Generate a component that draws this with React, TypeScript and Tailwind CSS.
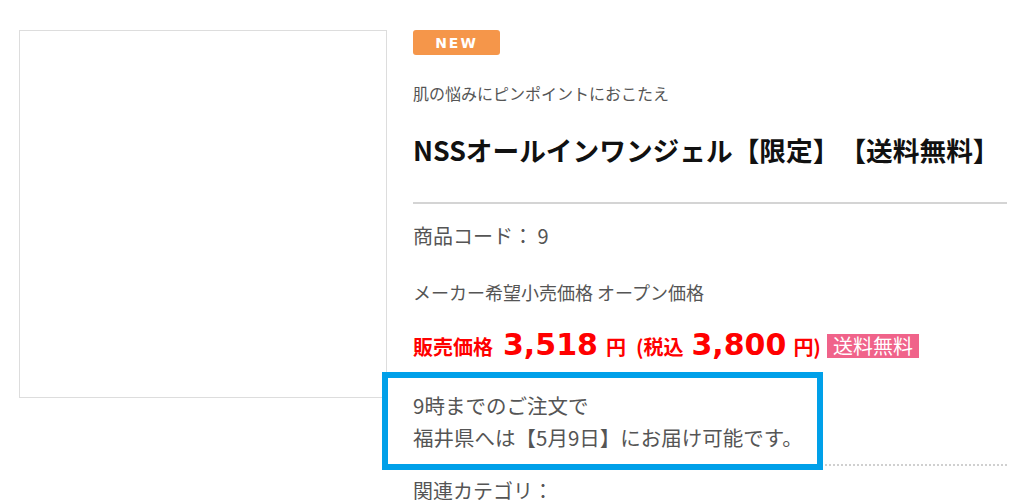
const jp = { fontFamily: '"Noto Sans CJK JP", sans-serif' };
const num = { fontFamily: '"DejaVu Sans", "Noto Sans CJK JP", sans-serif' };

const App = () => {
  return (
    <div className="relative w-[1024px] h-[500px] overflow-hidden bg-white [text-spacing-trim:space-all]" style={jp}>
      <div className="flex gap-[26px] pl-[19px] pt-[30px]">
        {/* Product image placeholder */}
        <div className="w-[368px] h-[368px] shrink-0 border border-[#dddddd] bg-white" />

        {/* Product info */}
        <div className="flex flex-col w-[594px]">
          <div
            className="w-[87px] h-[25px] rounded-[3px] bg-[#f5964a] text-white text-[14px] font-bold tracking-[2px] flex items-center justify-center leading-none"
            style={num}
          >
            NEW
          </div>

          <p className="mt-[28px] text-[16px] leading-[20px] text-[#555555]">
            肌の悩みにピンポイントにおこたえ
          </p>

          <h1 className="mt-[31px] text-[26.7px] leading-[32px] font-bold text-[#111111] whitespace-nowrap">
            NSSオールインワンジェル【限定】【送料無料】
          </h1>

          <div className="mt-[36px] h-[2px] bg-[#d4d4d4]" />

          <p className="mt-[20px] text-[20px] leading-[24px] text-[#555555]">商品コード： 9</p>

          <p className="mt-[32px] text-[18px] leading-[24px] text-[#555555]">
            メーカー希望小売価格 オープン価格
          </p>

          {/* Price row */}
          <div className="mt-[18px] h-[40px] flex items-baseline text-[#ff0000] font-bold whitespace-nowrap">
            <span className="text-[20px]">販売価格</span>
            <span className="ml-[10px] text-[30px]" style={num}>3,518</span>
            <span className="ml-[8px] text-[20px]">円</span>
            <span className="ml-[10px] text-[20px]">(税込</span>
            <span className="ml-[8px] text-[30px]" style={num}>3,800</span>
            <span className="ml-[7px] text-[20px]">円)</span>
            <span className="ml-[6px] self-end mb-[4px] h-[24px] px-[6px] flex items-center bg-[#f0638a] text-white text-[20px] font-normal leading-none">
              送料無料
            </span>
          </div>

          <div className="mt-[27px] text-[20.5px] leading-[32px] text-[#555555]">
            <p>9時までのご注文で</p>
            <p>福井県へは【5月9日】にお届け可能です。</p>
          </div>

          <div className="mt-[11px] border-t-2 border-dotted border-[#d0d0d0]" />

          <p className="mt-[13px] text-[20px] leading-[24px] text-[#555555]">関連カテゴリ：</p>
        </div>
      </div>

      {/* Highlight frame */}
      <div className="absolute left-[382px] top-[372px] w-[441px] h-[98px] border-[6px] border-[#00a0e9]" />
    </div>
  );
};

export default App;
